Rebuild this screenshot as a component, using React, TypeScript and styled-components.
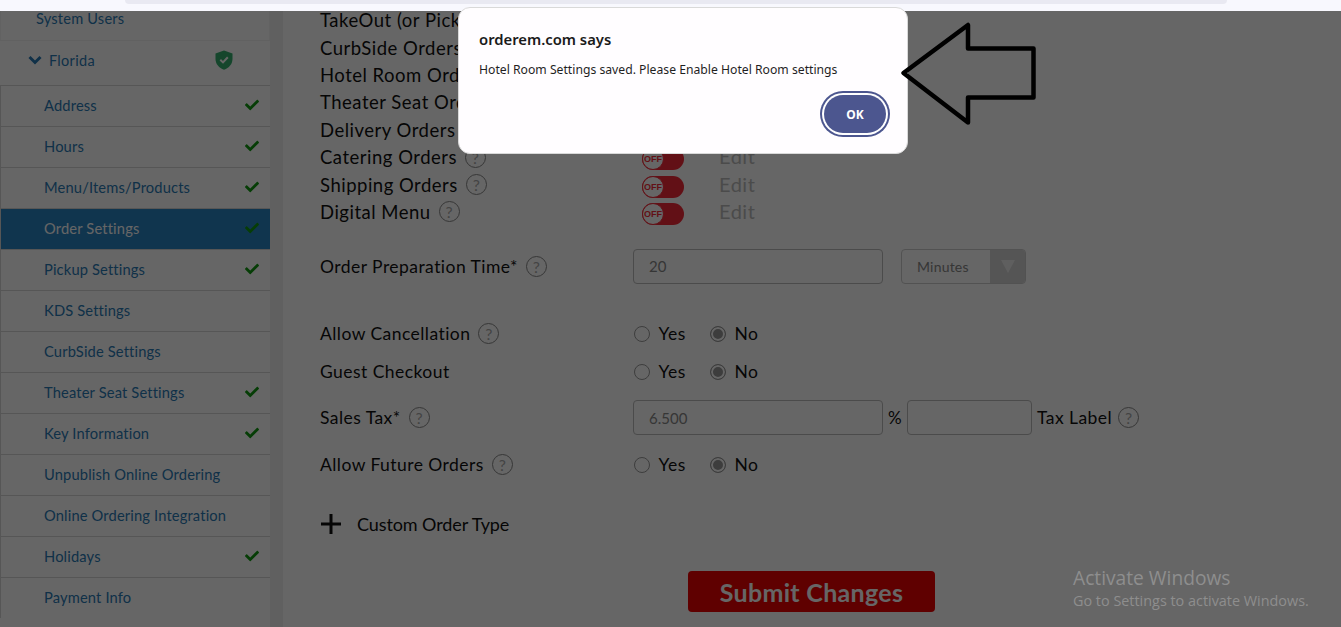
import React from "react";
import styled, { createGlobalStyle } from "styled-components";
import { FaCheck } from "react-icons/fa";

const Global = createGlobalStyle`
  html, body { margin: 0; padding: 0; height: 100%; background: #fff; overflow: hidden; }
  * { box-sizing: border-box; }
`;

const Page = styled.div`
  position: relative;
  width: 1341px;
  height: 627px;
  overflow: hidden;
  background: #fff;
  display: flex;
  flex-direction: column;
`;

const TopStrip = styled.div`
  flex: 0 0 11px;
  background: #f8f8fe;
  position: relative;
  z-index: 3;
  display: flex;
  padding-left: 125px;
`;

const AddressBar = styled.div`
  width: 1102px;
  height: 4px;
  background: #e9e9f2;
  border-radius: 0 0 12px 12px;
`;

const Body = styled.div`
  flex: 1;
  display: flex;
  min-height: 0;
`;

const Side = styled.nav`
  flex: 0 0 270px;
  font-family: "Lato", "Open Sans", sans-serif;
  color: #2a7ab5;
`;

const SystemRow = styled.div`
  height: 29px;
  padding: 0 0 14px 35px;
  font-size: 14.6px;
  display: flex;
  align-items: center;
  border-left: 1px solid #f4f4f4;
  border-right: 1px solid #f4f4f4;
  letter-spacing: 0.2px;
`;

const FloridaRow = styled.div`
  height: 45px;
  display: flex;
  align-items: center;
  padding: 0 0 6px 28px;
  font-size: 14.5px;
  letter-spacing: 0.3px;
  border-top: 1px solid #f2f2f2;
  gap: 7px;
`;

const ShieldWrap = styled.span`
  margin-left: 113px;
  display: flex;
`;

const NavRow = styled.div<{ $active?: boolean }>`
  height: 41px;
  padding: 0 10px 2px 43px;
  display: flex;
  align-items: center;
  justify-content: space-between;
  font-size: 14.7px;
  letter-spacing: 0.15px;
  border-top: 1px solid #d8d8d8;
  border-left: 1px solid #d8d8d8;
  background: ${(p) => (p.$active ? "#2a84c3" : "#fff")};
  color: ${(p) => (p.$active ? "#fff" : "#2a7ab5")};
`;

const Tick = styled(FaCheck)`
  width: 16px;
  height: 14px;
  margin-top: -1px;
  color: #0f9a0f;
`;

const Rail = styled.div`
  flex: 0 0 13px;
  background: #efefef;
`;

const Main = styled.main`
  flex: 1;
  padding: 0 0 0 37px;
  font-family: "Lato", "Open Sans", sans-serif;
  color: #111;
  position: relative;
`;

const Toggles = styled.div`
  margin-top: -4.5px;
  display: flex;
  flex-direction: column;
`;

const ToggleRow = styled.div`
  height: 27.4px;
  display: grid;
  grid-template-columns: 322px 77px auto;
  align-items: center;
  font-size: 18.5px;
  letter-spacing: 0.5px;
`;

const LabelWrap = styled.span`
  display: flex;
  align-items: center;
  gap: 8px;
  white-space: nowrap;
`;

const Help = styled.span`
  width: 21px;
  height: 21px;
  border: 1px solid #888;
  border-radius: 50%;
  display: inline-flex;
  align-items: center;
  justify-content: center;
  font-size: 16px;
  color: #aaa;
  letter-spacing: 0;
  flex: none;
`;

const Switch = styled.span`
  width: 42px;
  height: 22px;
  margin-top: 4px;
  border-radius: 11px;
  background: #f52a38;
  position: relative;
  display: block;
`;

const Knob = styled.span`
  position: absolute;
  left: 0;
  top: 0;
  width: 22px;
  height: 22px;
  border-radius: 50%;
  background: #fff;
  border: 1.5px solid #f52a38;
  color: #f52a38;
  font: 700 9px "Liberation Sans", sans-serif;
  letter-spacing: 0;
  display: flex;
  align-items: center;
  justify-content: center;
`;

const EditText = styled.span`
  font-size: 20px;
  color: #bbb;
  letter-spacing: 0.5px;
  margin-bottom: 2px;
`;

const FieldRow = styled.div<{ $top: number }>`
  display: grid;
  grid-template-columns: 313px auto;
  align-items: center;
  font-size: 17.5px;
  letter-spacing: 0.45px;
  margin-top: ${(p) => p.$top}px;
`;

const Controls = styled.div`
  display: flex;
  align-items: center;
`;

const TextInput = styled.div<{ $w: number }>`
  width: ${(p) => p.$w}px;
  height: 35px;
  border: 1px solid #bbb;
  border-radius: 4px;
  background: #fff;
  display: flex;
  align-items: center;
  padding-left: 15px;
  font-size: 15px;
  color: #888;
  letter-spacing: 0;
`;

const SelectBox = styled.div`
  width: 125px;
  height: 35px;
  margin-left: 18px;
  border: 1px solid #ccc;
  border-radius: 4px;
  display: flex;
  justify-content: space-between;
  overflow: hidden;
  font-size: 14px;
  color: #888;
  letter-spacing: 0.2px;
`;

const SelectText = styled.span`
  padding-left: 15px;
  display: flex;
  align-items: center;
`;

const SelectArrow = styled.span`
  width: 35px;
  background: #d4d4d4;
  display: flex;
  align-items: center;
  justify-content: center;
`;

const Radios = styled.div`
  display: flex;
  align-items: center;
  padding-left: 1px;
`;

const RadioLabel = styled.span`
  display: flex;
  align-items: center;
  gap: 8.5px;
  width: 76px;
  font-size: 17.5px;
`;

const RadioDot = styled.span<{ $on?: boolean }>`
  width: 16px;
  height: 16px;
  border-radius: 50%;
  border: 1px solid #999;
  background: ${(p) => (p.$on ? "#999" : "#fff")};
  box-shadow: ${(p) => (p.$on ? "inset 0 0 0 2px #fff" : "none")};
  flex: none;
`;

const Percent = styled.span`
  width: 24px;
  text-align: center;
  font-size: 17px;
`;

const TaxLabel = styled.span`
  margin-left: 5px;
  display: flex;
  align-items: center;
  gap: 6px;
`;

const CustomRow = styled.div`
  display: flex;
  align-items: center;
  gap: 16px;
  margin: 38px 0 0 1px;
  font-size: 18px;
  letter-spacing: -0.1px;
`;

const Submit = styled.div`
  width: 247px;
  height: 41px;
  margin: 36px 0 0 368px;
  border-radius: 4px;
  background: #ed0000;
  color: #fff;
  font-size: 25px;
  font-weight: 700;
  letter-spacing: 0.3px;
  display: flex;
  align-items: center;
  justify-content: center;
`;

const Advanced = styled.div`
  margin: 13px 0 0 413px;
  font-size: 15px;
  letter-spacing: 0.4px;
  color: #777;
`;

const Overlay = styled.div`
  position: absolute;
  left: 0;
  right: 0;
  top: 11px;
  bottom: 0;
  background: rgba(0, 0, 0, 0.6);
  z-index: 2;
`;

const Dialog = styled.div`
  position: absolute;
  left: 458px;
  top: 7px;
  width: 450px;
  height: 147px;
  background: #fffdff;
  border: 1px solid #d9d9d9;
  border-radius: 12px;
  padding: 21px 20px 0;
  font-family: "Noto Sans", "Open Sans", sans-serif;
  z-index: 4;
  display: flex;
  flex-direction: column;
`;

const DialogTitle = styled.div`
  font-size: 14.8px;
  font-weight: 600;
  line-height: 21px;
  color: #1a1a1a;
`;

const DialogMessage = styled.div`
  margin-top: 11px;
  font-size: 12.2px;
  line-height: 18px;
  color: #1f1f1f;
`;

const DialogActions = styled.div`
  display: flex;
  justify-content: flex-end;
  margin-top: 16px;
  padding-right: 1px;
`;

const OkButton = styled.div`
  width: 62px;
  height: 38px;
  border-radius: 19px;
  background: #4c568f;
  box-shadow: 0 0 0 2px #fff, 0 0 0 4px #4c568f;
  color: #fff;
  font-size: 12px;
  font-weight: 700;
  display: flex;
  align-items: center;
  justify-content: center;
`;

const ArrowSvg = styled.svg`
  position: absolute;
  left: 895px;
  top: 15px;
  z-index: 4;
`;

const Watermark = styled.div`
  position: absolute;
  left: 1073px;
  top: 566px;
  z-index: 5;
  font-family: "Open Sans", "Noto Sans", sans-serif;
  color: #8e8e8e;
`;

const WatermarkTitle = styled.div`
  font-size: 19.2px;
  line-height: 24px;
`;

const WatermarkSub = styled.div`
  font-size: 14.4px;
  line-height: 21px;
`;

const Shield = () => (
  <svg width="18" height="20" viewBox="0 0 18 20">
    <path d="M9 0.5 L17.5 3.5 V9 C17.5 14 14 18 9 19.8 C4 18 0.5 14 0.5 9 V3.5 Z" fill="#35b06f" />
    <path d="M5.3 9.8 L8 12.4 L12.8 7.2" fill="none" stroke="#fff" strokeWidth="2" />
  </svg>
);

const Chevron = () => (
  <svg width="14" height="10" viewBox="0 0 14 10">
    <path d="M1.5 2 L7 7.5 L12.5 2" fill="none" stroke="#2a7ab5" strokeWidth="3" />
  </svg>
);

const navItems: [string, boolean][] = [
  ["Address", true],
  ["Hours", true],
  ["Menu/Items/Products", true],
  ["Order Settings", true],
  ["Pickup Settings", true],
  ["KDS Settings", false],
  ["CurbSide Settings", false],
  ["Theater Seat Settings", true],
  ["Key Information", true],
  ["Unpublish Online Ordering", false],
  ["Online Ordering Integration", false],
  ["Holidays", true],
  ["Payment Info", false],
];

const toggles = [
  "TakeOut (or Pickup) Orders",
  "CurbSide Orders",
  "Hotel Room Orders",
  "Theater Seat Orders",
  "Delivery Orders",
  "Catering Orders",
  "Shipping Orders",
  "Digital Menu",
];

const YesNo = () => (
  <Radios>
    <RadioLabel>
      <RadioDot />
      Yes
    </RadioLabel>
    <RadioLabel>
      <RadioDot $on />
      No
    </RadioLabel>
  </Radios>
);

export default function App() {
  return (
    <Page>
      <Global />
      <TopStrip>
        <AddressBar />
      </TopStrip>
      <Body>
        <Side>
          <SystemRow>System Users</SystemRow>
          <FloridaRow>
            <Chevron />
            Florida
            <ShieldWrap>
              <Shield />
            </ShieldWrap>
          </FloridaRow>
          {navItems.map(([name, ok]) => (
            <NavRow key={name} $active={name === "Order Settings"}>
              {name}
              {ok && <Tick />}
            </NavRow>
          ))}
        </Side>
        <Rail />
        <Main>
          <Toggles>
            {toggles.map((t) => (
              <ToggleRow key={t}>
                <LabelWrap>
                  {t}
                  <Help>?</Help>
                </LabelWrap>
                <span>
                  <Switch>
                    <Knob>OFF</Knob>
                  </Switch>
                </span>
                <EditText>Edit</EditText>
              </ToggleRow>
            ))}
          </Toggles>
          <FieldRow $top={23}>
            <LabelWrap>
              Order Preparation Time*
              <Help>?</Help>
            </LabelWrap>
            <Controls>
              <TextInput $w={250}>20</TextInput>
              <SelectBox>
                <SelectText>Minutes</SelectText>
                <SelectArrow>
                  <svg width="14" height="13" viewBox="0 0 14 13">
                    <path d="M0 0 H14 L7 13 Z" fill="#eee" />
                  </svg>
                </SelectArrow>
              </SelectBox>
            </Controls>
          </FieldRow>
          <FieldRow $top={39.5}>
            <LabelWrap>
              Allow Cancellation
              <Help>?</Help>
            </LabelWrap>
            <YesNo />
          </FieldRow>
          <FieldRow $top={17}>
            <LabelWrap>Guest Checkout</LabelWrap>
            <YesNo />
          </FieldRow>
          <FieldRow $top={18}>
            <LabelWrap>
              Sales Tax*
              <Help>?</Help>
            </LabelWrap>
            <Controls>
              <TextInput $w={250}>6.500</TextInput>
              <Percent>%</Percent>
              <TextInput $w={125} />
              <TaxLabel>
                Tax Label
                <Help>?</Help>
              </TaxLabel>
            </Controls>
          </FieldRow>
          <FieldRow $top={19}>
            <LabelWrap>
              Allow Future Orders
              <Help>?</Help>
            </LabelWrap>
            <YesNo />
          </FieldRow>
          <CustomRow>
            <svg width="20" height="20" viewBox="0 0 20 20">
              <path d="M10 0 V20 M0 10 H20" stroke="#111" strokeWidth="3" />
            </svg>
            Custom Order Type
          </CustomRow>
          <Submit>Submit Changes</Submit>
          <Advanced>Advanced Options</Advanced>
        </Main>
      </Body>
      <Overlay />
      <Dialog>
        <DialogTitle>orderem.com says</DialogTitle>
        <DialogMessage>Hotel Room Settings saved. Please Enable Hotel Room settings</DialogMessage>
        <DialogActions>
          <OkButton>OK</OkButton>
        </DialogActions>
      </Dialog>
      <ArrowSvg width="145" height="115" viewBox="895 15 145 115">
        <path
          d="M903.5 73 L968 25 V48.5 H1033.5 V97.5 H968 V122.5 Z"
          fill="none"
          stroke="#000"
          strokeWidth="4.5"
          strokeLinejoin="round"
        />
      </ArrowSvg>
      <Watermark>
        <WatermarkTitle>Activate Windows</WatermarkTitle>
        <WatermarkSub>Go to Settings to activate Windows.</WatermarkSub>
      </Watermark>
    </Page>
  );
}
